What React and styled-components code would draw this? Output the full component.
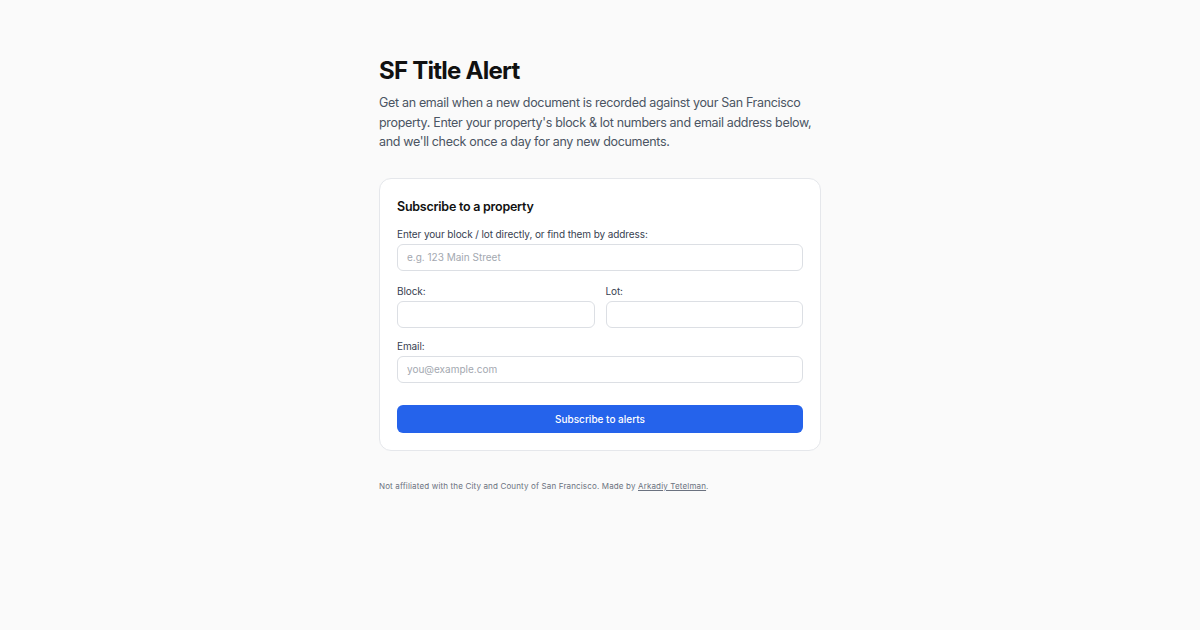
import React from "react";
import styled, { createGlobalStyle } from "styled-components";

const Global = createGlobalStyle`
  html, body { margin: 0; padding: 0; background: #fafafa; }
  body { font-family: Inter, "Noto Sans", sans-serif; color: #111827; -webkit-font-smoothing: antialiased; }
  * { box-sizing: border-box; }
`;

const Page = styled.main`
  width: 442px;
  margin: 0 auto;
  padding-top: 55px;
`;

const Title = styled.h1`
  margin: 0;
  font-size: 24px;
  font-weight: 700;
  letter-spacing: -0.75px;
  line-height: 32px;
  color: #111111;
`;

const Intro = styled.p`
  margin: 6px 0 0;
  font-size: 12.5px;
  letter-spacing: -0.32px;
  line-height: 19.5px;
  color: #4b5563;
`;

const Card = styled.section`
  margin-top: 26px;
  background: #ffffff;
  border: 1px solid #e5e7eb;
  border-radius: 12px;
  padding: 18px 17px 17px;
`;

const CardTitle = styled.h2`
  margin: 0 0 10px;
  font-size: 12.5px;
  font-weight: 600;
  letter-spacing: -0.25px;
  line-height: 20px;
  color: #111111;
`;

const Field = styled.div`
  display: flex;
  flex-direction: column;
  gap: 3px;
  margin-bottom: ${(p) => p.$mb ?? 13}px;
`;

const Label = styled.label`
  font-size: 10px;
  letter-spacing: -0.1px;
  line-height: 14px;
  color: #374151;
`;

const Input = styled.input`
  width: 100%;
  height: 27px;
  border: 1px solid #dcdfe4;
  border-radius: 6px;
  padding: 0 9px;
  font-family: inherit;
  font-size: 10px;
  color: #111827;
  background: #ffffff;
  outline: none;
  &::placeholder { color: #a3a8b0; }
`;

const Row = styled.div`
  display: grid;
  grid-template-columns: 1fr 1fr;
  gap: 11px;
`;

const Button = styled.button`
  width: 100%;
  height: 28px;
  margin-top: 22px;
  border: none;
  border-radius: 6px;
  background: #2563eb;
  color: #ffffff;
  font-family: inherit;
  font-size: 10px;
  font-weight: 500;
  cursor: pointer;
`;

const Footer = styled.p`
  margin: 29px 0 0;
  font-size: 8px;
  letter-spacing: 0.15px;
  line-height: 12px;
  color: #6b7280;
  a { color: #6b7280; text-decoration: underline; }
`;

export default function App() {
  return (
    <>
      <Global />
      <Page>
        <Title>SF Title Alert</Title>
        <Intro>
          Get an email when a new document is recorded against your San Francisco
          property. Enter your property's block &amp; lot numbers and email address below,
          and we'll check once a day for any new documents.
        </Intro>
        <Card>
          <CardTitle>Subscribe to a property</CardTitle>
          <Field>
            <Label>Enter your block / lot directly, or find them by address:</Label>
            <Input placeholder="e.g. 123 Main Street" />
          </Field>
          <Row>
            <Field $mb={11}>
              <Label>Block:</Label>
              <Input />
            </Field>
            <Field $mb={11}>
              <Label>Lot:</Label>
              <Input />
            </Field>
          </Row>
          <Field $mb={0}>
            <Label>Email:</Label>
            <Input placeholder="you@example.com" />
          </Field>
          <Button>Subscribe to alerts</Button>
        </Card>
        <Footer>
          Not affiliated with the City and County of San Francisco. Made by{" "}
          <a href="#">Arkadiy Tetelman</a>.
        </Footer>
      </Page>
    </>
  );
}
